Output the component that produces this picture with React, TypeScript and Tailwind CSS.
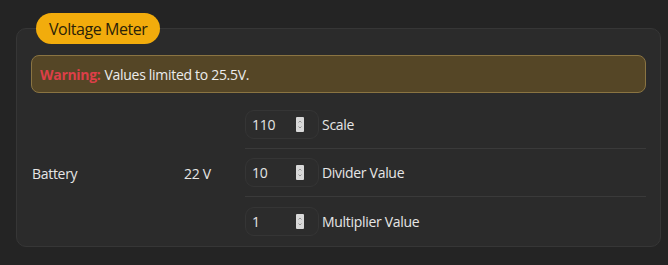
import React from "react";

function Spinner() {
  return (
    <svg width="8" height="15" viewBox="0 0 8 15" className="shrink-0">
      <rect x="0" y="0" width="8" height="15" rx="1" fill="#d8d8d8" />
      <path d="M2.5 5.5 L4 4 L5.5 5.5" stroke="#8a8a8a" strokeWidth="0.9" fill="none" />
      <path d="M2.5 9.5 L4 11 L5.5 9.5" stroke="#8a8a8a" strokeWidth="0.9" fill="none" />
    </svg>
  );
}

function NumInput({ value }: { value: string }) {
  return (
    <div className="w-[74px] h-[29px] rounded-[9px] border border-[#353535] bg-[#2c2c2c] flex items-center justify-between pl-[6px] pr-[14px]">
      <span className="text-[14px] text-[#e4e4e4] tracking-[-0.3px]">{value}</span>
      <Spinner />
    </div>
  );
}

export default function App() {
  const rows = [
    { v: "110", l: "Scale" },
    { v: "10", l: "Divider Value" },
    { v: "1", l: "Multiplier Value" },
  ];
  return (
    <div
      className="w-[668px] h-[265px] bg-[#242424] pt-[28px] pl-[16px]"
      style={{ fontFamily: '"Open Sans", "Noto Sans", sans-serif' }}
    >
      <div className="relative w-[645px] h-[219px] rounded-[10px] border border-[#363636] bg-[#2b2b2b] pt-[26px] px-[14px]">
        <div className="absolute left-[19px] top-[-16px] h-[31px] px-[13px] rounded-full bg-[#f2ac0c] flex items-center text-[16px] tracking-[-0.45px] text-[#2a2208]">
          Voltage Meter
        </div>
        <div className="h-[38px] rounded-[8px] border border-[#8a7442] bg-[#554626] flex items-center pl-[8px] text-[14px] tracking-[-0.3px] text-[#ececec]">
          <span className="font-bold text-[#dd3f48] mr-[4px]">Warning:</span>
          <span>Values limited to 25.5V.</span>
        </div>
        <div className="flex mt-[8px] tracking-[-0.3px]">
          <div className="w-[153px] flex items-center pl-[1px] text-[14px] text-[#e6e6e6]">Battery</div>
          <div className="w-[61px] flex items-center text-[14px] text-[#e6e6e6]">22 V</div>
          <div className="flex-1 flex flex-col">
            {rows.map((r, i) => (
              <div
                key={r.l}
                className={
                  i < 2
                    ? "h-[48px] flex items-center gap-[3px] border-b border-[#3a3a3a]"
                    : "h-[48px] flex items-center gap-[3px]"
                }
              >
                <NumInput value={r.v} />
                <span className="text-[14px] text-[#e6e6e6]">{r.l}</span>
              </div>
            ))}
          </div>
        </div>
      </div>
    </div>
  );
}
